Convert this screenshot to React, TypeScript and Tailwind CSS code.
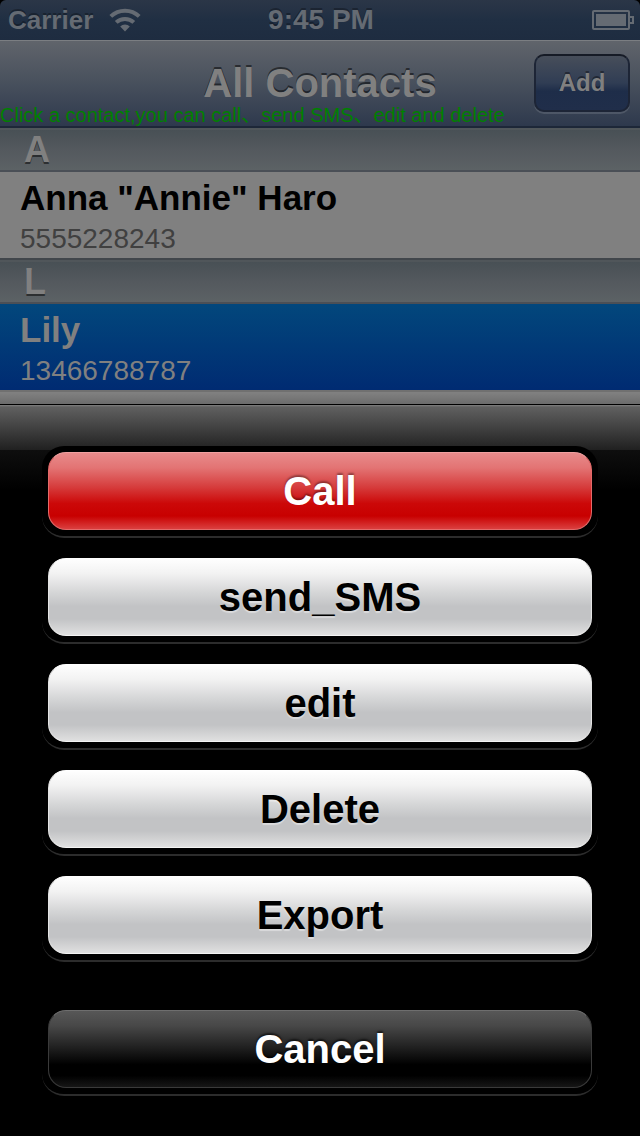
import clsx from "clsx";

type Contact = {
  name: string;
  phone: string;
  selected: boolean;
};

type ContactSection = {
  letter: string;
  contacts: Contact[];
};

type ActionVariant = "destructive" | "default" | "cancel";

const SECTIONS: ContactSection[] = [
  {
    letter: "A",
    contacts: [
      { name: 'Anna "Annie" Haro', phone: "5555228243", selected: false },
    ],
  },
  {
    letter: "L",
    contacts: [{ name: "Lily", phone: "13466788787", selected: true }],
  },
];

const ACTIONS: { label: string; variant: ActionVariant }[] = [
  { label: "Call", variant: "destructive" },
  { label: "send_SMS", variant: "default" },
  { label: "edit", variant: "default" },
  { label: "Delete", variant: "default" },
  { label: "Export", variant: "default" },
];

const VARIANT_CLASSES: Record<ActionVariant, string> = {
  destructive:
    "border-[#e46a6a] border-t-[#f0a0a0] bg-[linear-gradient(#e88c8c_0%,#e37474_20%,#d63c3c_45%,#cc0808_66%,#c80000_82%,#dc4444_100%)] text-white [text-shadow:0_-2px_2px_rgba(0,0,0,0.35)]",
  default:
    "border-[#e4e4e4] border-t-white border-b-[#f4f4f4] bg-[linear-gradient(#ffffff_0%,#f2f2f2_20%,#d4d5d6_45%,#c2c3c5_62%,#c2c3c5_78%,#e2e2e2_100%)] text-black [text-shadow:0_2px_1px_rgba(255,255,255,0.4)]",
  cancel:
    "border-[#3a3a3a] border-t-[#6e6e6e] bg-[linear-gradient(#585858_0%,#484848_20%,#202020_48%,#000000_70%,#000000_84%,#181818_100%)] text-white [text-shadow:0_-2px_2px_rgba(0,0,0,0.6)]",
};

function WifiIcon() {
  return (
    <svg viewBox="0 0 32 26" className="h-[26px] w-8" aria-hidden="true">
      <g fill="none" stroke="#656b73" strokeWidth="4">
        <path d="M1.8 9.4A20.4 20.4 0 0 1 30.2 9.4" />
        <path d="M7.2 15.4A12.8 12.8 0 0 1 24.8 15.4" />
      </g>
      <path d="M16 24.5L11.2 19.6A6.8 6.8 0 0 1 20.8 19.6Z" fill="#656b73" />
    </svg>
  );
}

function BatteryIcon() {
  return (
    <svg viewBox="0 0 42 20" className="h-5 w-[42px]" aria-hidden="true">
      <rect
        x="1"
        y="1"
        width="36"
        height="18"
        rx="1"
        fill="none"
        stroke="#656b73"
        strokeWidth="2"
      />
      <rect x="4" y="4" width="30" height="12" fill="#656b73" />
      <path
        d="M38 7H41V13H38"
        fill="none"
        stroke="#656b73"
        strokeWidth="2"
      />
    </svg>
  );
}

function StatusBar() {
  return (
    <div className="bg-black">
      <div className="grid h-10 grid-cols-[1fr_auto_1fr] items-center rounded-t-[6px] bg-[linear-gradient(#2b3647,#202f43_50%,#1e2c40)] pr-1.5 pb-0.5 pl-2 font-bold text-[#656b73] [text-shadow:0_-2px_0_rgba(0,0,0,0.3)]">
        <div className="flex items-center gap-4">
          <span className="text-[26px] leading-10">Carrier</span>
          <WifiIcon />
        </div>
        <span className="text-[28px] leading-10">9:45 PM</span>
        <div className="flex justify-end">
          <BatteryIcon />
        </div>
      </div>
    </div>
  );
}

function NavBar() {
  return (
    <header className="relative grid h-22 grid-cols-[1fr_auto_1fr] items-center border-t border-b-2 border-t-[#7b7e82] border-b-[#1d2738] bg-[linear-gradient(#60646b,#4a525e_45%,#2e394d)] px-2.5 pb-px">
      <h1 className="col-start-2 text-[40px] leading-[44px] font-bold text-[#808080] [text-shadow:0_-2px_0_rgba(0,0,0,0.5)]">
        All Contacts
      </h1>
      <button
        type="button"
        className="h-[58px] w-24 justify-self-end rounded-[10px] border-2 border-[#1d2536] border-t-[#161b26] bg-[linear-gradient(#474e5a,#303d54_50%,#1e2d49_65%,#202e4a)] text-2xl font-bold text-[#808080] shadow-[0_2px_0_rgba(255,255,255,0.12)] [text-shadow:0_-2px_0_rgba(0,0,0,0.4)]"
      >
        Add
      </button>
      <p className="absolute bottom-0 left-0 text-[20px] leading-[22px] whitespace-nowrap text-[#008000]">
        Click a contact,you can call、send SMS、edit and delete
      </p>
    </header>
  );
}

function ContactRow({ contact }: { contact: Contact }) {
  return (
    <li
      className={clsx(
        "h-[86px] px-5 pt-1",
        contact.selected
          ? "bg-[linear-gradient(#02477c,#002b72)] text-[#808080]"
          : "bg-[#808080] text-black",
      )}
    >
      <p className="text-[35px] leading-[44px] font-bold">{contact.name}</p>
      <p
        className={clsx(
          "text-[28px] leading-[38px]",
          !contact.selected && "text-[#404040]",
        )}
      >
        {contact.phone}
      </p>
    </li>
  );
}

function ContactList() {
  return (
    <main className="flex-1 bg-[linear-gradient(#808080_96%,#6c6c6c)]">
      {SECTIONS.map((section) => (
        <section
          key={section.letter}
          className="not-first:border-t-2 not-first:border-[#41464b]"
        >
          <h2 className="h-11 border-t-2 border-b-2 border-t-[#50565a] border-b-[#4a4f56] bg-[linear-gradient(#485055,#54595e_50%,#5c6265)] px-6 text-[36px] leading-10 font-bold text-[#808080] [text-shadow:0_2px_0_rgba(0,0,0,0.5)]">
            {section.letter}
          </h2>
          <ul>
            {section.contacts.map((contact) => (
              <ContactRow key={contact.phone} contact={contact} />
            ))}
          </ul>
        </section>
      ))}
      <div className="border-t-2 border-[#707070]" />
    </main>
  );
}

function ActionButton({
  label,
  variant,
}: {
  label: string;
  variant: ActionVariant;
}) {
  return (
    <div className="rounded-[22px] border-b-2 border-[#2c2c2c] bg-black p-1.5">
      <button
        type="button"
        className={clsx(
          "block h-[78px] w-full rounded-[18px] border bg-origin-border text-[40px] leading-[76px] font-bold",
          VARIANT_CLASSES[variant],
        )}
      >
        {label}
      </button>
    </div>
  );
}

function ActionSheet() {
  return (
    <div
      role="dialog"
      aria-label="Contact actions"
      className="border-t border-black bg-[linear-gradient(#808080_0px,#606060_2px,#202020_45px,#0e0e0e_45px,#000000_85px)] px-[42px] pt-[41px] pb-10"
    >
      <div className="flex flex-col gap-3.5">
        {ACTIONS.map((action) => (
          <ActionButton key={action.label} {...action} />
        ))}
      </div>
      <div className="mt-[42px]">
        <ActionButton label="Cancel" variant="cancel" />
      </div>
    </div>
  );
}

export default function App() {
  return (
    <div className="flex min-h-screen flex-col bg-black font-['Liberation_Sans','Noto_Sans_CJK_SC',sans-serif]">
      <StatusBar />
      <NavBar />
      <ContactList />
      <ActionSheet />
    </div>
  );
}
